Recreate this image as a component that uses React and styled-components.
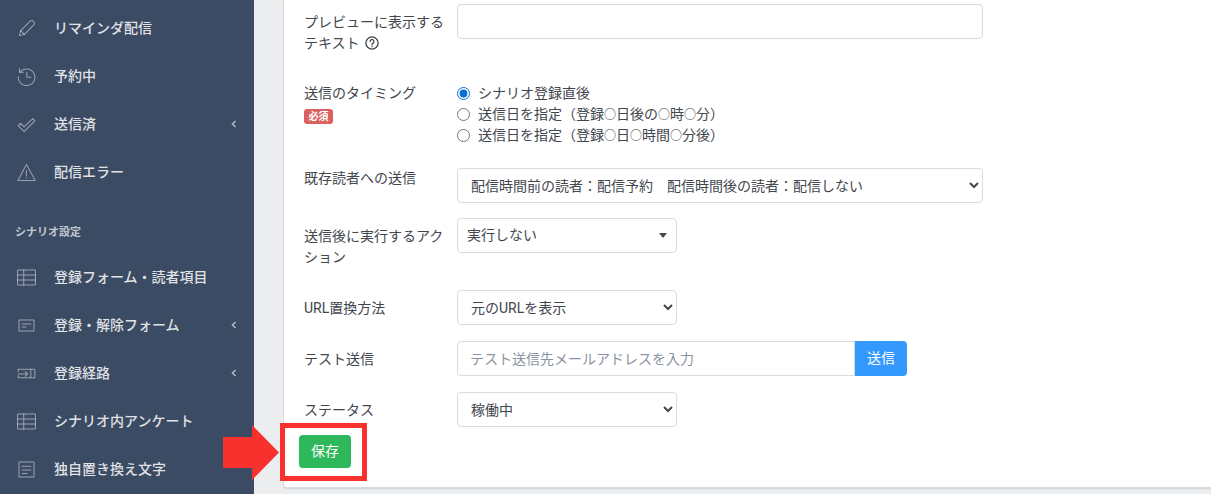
import React from 'react';
import styled, { createGlobalStyle } from 'styled-components';

const GlobalStyle = createGlobalStyle`
  html, body {
    margin: 0;
    padding: 0;
    background: #ebedef;
  }
  body {
    font-family: Roboto, "Noto Sans CJK JP", sans-serif;
    font-size: 14px;
    line-height: 21px;
    color: #42464d;
  }
`;

const Page = styled.div`
  position: relative;
  display: flex;
  width: 1211px;
  height: 494px;
  overflow: hidden;
`;

const Sidebar = styled.aside`
  width: 254px;
  flex: none;
  padding-top: 4px;
  background: #3c4b64;
  color: rgba(255, 255, 255, 0.85);
`;

const NavItem = styled.div`
  display: flex;
  align-items: center;
  height: 48px;
  padding-left: 17px;
  font-weight: 500;
`;

const NavIcon = styled.svg`
  width: 19px;
  height: 19px;
  flex: none;
  margin-right: 18px;
  fill: none;
  stroke: rgba(255, 255, 255, 0.48);
  stroke-width: 1.3;
  stroke-linecap: round;
  stroke-linejoin: round;
`;

const NavLabel = styled.span`
  flex: 1;
`;

const NavCaret = styled.svg`
  width: 6px;
  height: 8px;
  flex: none;
  margin-right: 17px;
  fill: none;
  stroke: rgba(255, 255, 255, 0.6);
  stroke-width: 1.6;
`;

const NavTitle = styled.div`
  padding: 29px 15px 13px;
  font-size: 11px;
  font-weight: 700;
  line-height: 15px;
  color: rgba(255, 255, 255, 0.7);
`;

const Main = styled.main`
  flex: 1;
  min-width: 0;
  padding: 0 0 6px 29px;
  display: flex;
`;

const Card = styled.section`
  flex: 1;
  padding: 4px 0 0 15px;
  background: #fff;
  border: 1px solid #d8dbe0;
  border-width: 0 0 1px 1px;
  border-bottom-left-radius: 4px;
  box-shadow: 0 1px 1px rgba(60, 75, 100, 0.14);
`;

const Row = styled.div`
  display: grid;
  grid-template-columns: 153px max-content;
  margin: 0 0 ${({ $mb }) => $mb ?? 16}px 5px;
`;

const Label = styled.div`
  padding: ${({ $flush }) => ($flush ? '0' : '8px 0 6px')};
`;

const Badge = styled.span`
  display: block;
  width: 29px;
  height: 15px;
  margin-top: 5px;
  border-radius: 3px;
  background: #d9615f;
  color: #fff;
  font-size: 10px;
  font-weight: 700;
  line-height: 15px;
  text-align: center;
`;

const HelpIcon = styled.svg`
  width: 14px;
  height: 14px;
  margin-left: 5px;
  vertical-align: -2px;
  fill: none;
  stroke: #42464d;
  stroke-width: 1.5;
  stroke-linecap: round;
`;

const TextInput = styled.input`
  box-sizing: border-box;
  width: ${({ $w }) => $w}px;
  height: 35px;
  padding: 6px 12px;
  border: 1px solid #d8dbe0;
  border-radius: ${({ $joined }) => ($joined ? '4px 0 0 4px' : '4px')};
  background: #fff;
  font: inherit;
  color: #42464d;
  outline: none;
  &::placeholder {
    color: #8a93a2;
    opacity: 1;
  }
`;

const Select = styled.select`
  box-sizing: border-box;
  width: ${({ $w }) => $w}px;
  height: 35px;
  padding: 6px 9px;
  border: 1px solid #d8dbe0;
  border-radius: 4px;
  background: #fff;
  font: inherit;
  color: #42464d;
`;

const ComboBox = styled.div`
  box-sizing: border-box;
  display: flex;
  align-items: center;
  justify-content: space-between;
  width: 220px;
  height: 35px;
  padding: 0 9px;
  border: 1px solid #d8dbe0;
  border-radius: 4px;
  &::after {
    content: "";
    border-style: solid;
    border-width: 5px 4px 0;
    border-color: #42464d transparent transparent;
  }
`;

const RadioList = styled.div`
  display: flex;
  flex-direction: column;
`;

const RadioLine = styled.label`
  display: flex;
  align-items: center;
  height: 21px;
`;

const Radio = styled.input`
  width: 13px;
  height: 13px;
  margin: 0 8px 0 0;
  accent-color: #0a6ed1;
`;

const Mark = styled.span`
  font-size: 12px;
`;

const InputGroup = styled.div`
  display: flex;
`;

const SendButton = styled.button`
  width: 52px;
  height: 35px;
  padding: 0;
  border: 0;
  border-radius: 0 4px 4px 0;
  background: #39f;
  color: #fff;
  font: inherit;
`;

const SaveButton = styled.button`
  display: block;
  width: 52px;
  height: 33px;
  padding: 0;
  border: 0;
  border-radius: 4px;
  background: #2eb85c;
  color: #fff;
  font: inherit;
`;

const Highlight = styled.div`
  position: absolute;
  left: 280px;
  top: 423px;
  width: 87px;
  height: 58px;
  box-sizing: border-box;
  border: 5px solid #f8312f;
  pointer-events: none;
`;

const Arrow = styled.svg`
  position: absolute;
  left: 222px;
  top: 424px;
  width: 58px;
  height: 57px;
  fill: #f8312f;
`;

const icons = {
  pencil: (
    <>
      <path d="M3 21l1.6-6.4L16.6 2.8a2.6 2.6 0 0 1 3.7 0l.9.9a2.6 2.6 0 0 1 0 3.7L9.4 19.4z" />
      <path d="M4.6 14.6l4.8 4.8" />
    </>
  ),
  history: (
    <>
      <path d="M3.8 6.5A10.5 10.5 0 1 1 1.6 12" />
      <path d="M3.2 1.8v4.8H8" />
      <path d="M12.5 6.5V13h5" />
    </>
  ),
  check: <path d="M1.5 13.5l3-3 4.5 4.5L20 4.5l2.5 3L9 21z" />,
  warning: (
    <>
      <path d="M12 1.8L23 22H1z" />
      <path d="M12 9.5v6.5M12 18.2v.6" />
    </>
  ),
  table: (
    <>
      <rect x="0.7" y="2.5" width="22.6" height="19" rx="1" />
      <path d="M0.7 8.8h22.6M0.7 15.2h22.6M8.5 2.5v19" />
    </>
  ),
  form: (
    <>
      <rect x="2.5" y="5" width="19" height="14" rx="0.5" />
      <path d="M6.5 10h11M6.5 14h5" />
    </>
  ),
  input: (
    <>
      <path d="M1.5 9.5V6.5h21v11h-21v-2.5" />
      <path d="M1.5 12.5h12M10.5 9.5l3 3-3 3M17.5 6.5v11" />
    </>
  ),
  text: (
    <>
      <rect x="2.5" y="2.5" width="19" height="19" rx="0.5" />
      <path d="M6.5 8h11M6.5 12.5h11M6.5 17h6" />
    </>
  ),
};

const NavRow = ({ icon, caret, children }) => (
  <NavItem>
    <NavIcon viewBox="0 0 24 24">{icons[icon]}</NavIcon>
    <NavLabel>{children}</NavLabel>
    {caret && (
      <NavCaret viewBox="0 0 6 8">
        <path d="M4.5 1L1.5 4l3 3" />
      </NavCaret>
    )}
  </NavItem>
);

const App = () => {
  return (
    <Page>
      <GlobalStyle />
      <Sidebar>
        <NavRow icon="pencil">リマインダ配信</NavRow>
        <NavRow icon="history">予約中</NavRow>
        <NavRow icon="check" caret>送信済</NavRow>
        <NavRow icon="warning">配信エラー</NavRow>
        <NavTitle>シナリオ設定</NavTitle>
        <NavRow icon="table">登録フォーム・読者項目</NavRow>
        <NavRow icon="form" caret>登録・解除フォーム</NavRow>
        <NavRow icon="input" caret>登録経路</NavRow>
        <NavRow icon="table">シナリオ内アンケート</NavRow>
        <NavRow icon="text">独自置き換え文字</NavRow>
      </Sidebar>
      <Main>
        <Card>
          <Row $mb={23}>
            <Label>
              プレビューに表示する
              <br />
              テキスト
              <HelpIcon viewBox="0 0 16 16">
                <circle cx="8" cy="8" r="7" />
                <path d="M5.8 6.2a2.2 2.2 0 1 1 3.4 1.9C8.4 8.6 8 9 8 10M8 12v.2" />
              </HelpIcon>
            </Label>
            <TextInput $w={526} />
          </Row>
          <Row $mb={22}>
            <Label $flush>
              送信のタイミング
              <Badge>必須</Badge>
            </Label>
            <RadioList>
              <RadioLine>
                <Radio type="radio" name="timing" defaultChecked />
                シナリオ登録直後
              </RadioLine>
              <RadioLine>
                <Radio type="radio" name="timing" />
                <span>送信日を指定（登録<Mark>○</Mark>日後の<Mark>○</Mark>時<Mark>○</Mark>分）</span>
              </RadioLine>
              <RadioLine>
                <Radio type="radio" name="timing" />
                <span>送信日を指定（登録<Mark>○</Mark>日<Mark>○</Mark>時間<Mark>○</Mark>分後）</span>
              </RadioLine>
            </RadioList>
          </Row>
          <Row $mb={15}>
            <Label $flush>既存読者への送信</Label>
            <Select $w={526}>
              <option>配信時間前の読者：配信予約　配信時間後の読者：配信しない</option>
            </Select>
          </Row>
          <Row>
            <Label>
              送信後に実行するアク
              <br />
              ション
            </Label>
            <ComboBox>実行しない</ComboBox>
          </Row>
          <Row>
            <Label>URL置換方法</Label>
            <Select $w={220}>
              <option>元のURLを表示</option>
            </Select>
          </Row>
          <Row>
            <Label>テスト送信</Label>
            <InputGroup>
              <TextInput $w={398} $joined placeholder="テスト送信先メールアドレスを入力" />
              <SendButton type="button">送信</SendButton>
            </InputGroup>
          </Row>
          <Row $mb={8}>
            <Label>ステータス</Label>
            <Select $w={220}>
              <option>稼働中</option>
            </Select>
          </Row>
          <SaveButton type="button">保存</SaveButton>
        </Card>
      </Main>
      <Arrow viewBox="0 0 58 57">
        <path d="M1 13h29V1l27 27.5L30 56V44H1z" />
      </Arrow>
      <Highlight />
    </Page>
  );
};

export default App;
